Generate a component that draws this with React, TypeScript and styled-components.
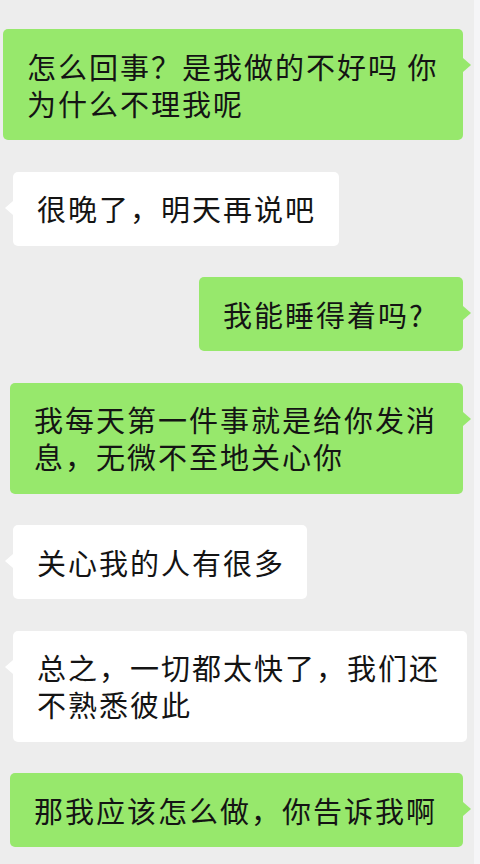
import * as React from "react";
import styled, { createGlobalStyle } from "styled-components";

type Side = "me" | "them";

interface Message {
  side: Side;
  lines: string[];
  width: number;
}

const messages: Message[] = [
  { side: "me", lines: ["怎么回事？是我做的不好吗 你", "为什么不理我呢"], width: 460 },
  { side: "them", lines: ["很晚了，明天再说吧"], width: 326 },
  { side: "me", lines: ["我能睡得着吗?"], width: 264 },
  { side: "me", lines: ["我每天第一件事就是给你发消", "息，无微不至地关心你"], width: 453 },
  { side: "them", lines: ["关心我的人有很多"], width: 294 },
  { side: "them", lines: ["总之，一切都太快了，我们还", "不熟悉彼此"], width: 454 },
  { side: "me", lines: ["那我应该怎么做，你告诉我啊"], width: 453 },
];

const GlobalStyle = createGlobalStyle`
  html, body {
    margin: 0;
    padding: 0;
    background: #ededed;
  }
  body {
    font-family: "Noto Sans CJK SC", "Noto Sans", sans-serif;
  }
`;

const Screen = styled.div`
  box-sizing: border-box;
  width: 480px;
  height: 864px;
  overflow: hidden;
  background: #ededed;
  border-right: 6px solid #f5f5f7;
  display: flex;
  flex-direction: column;
  gap: 31.5px;
  padding: 29px 0 0;
`;

interface RowProps {
  $side: Side;
}

const Row = styled.div<RowProps>`
  display: flex;
  justify-content: ${(p) => (p.$side === "me" ? "flex-end" : "flex-start")};
  padding: ${(p) => (p.$side === "me" ? "0 11px 0 0" : "0 0 0 13px")};
`;

interface BubbleProps {
  $side: Side;
  $width: number;
}

const Bubble = styled.div<BubbleProps>`
  position: relative;
  box-sizing: border-box;
  width: ${(p) => p.$width}px;
  padding: 18.5px 20px 18.5px 24px;
  border-radius: 5px;
  background: ${(p) => (p.$side === "me" ? "#97e86c" : "#ffffff")};
  color: #141414;
  font-size: 29px;
  line-height: 37px;
  letter-spacing: 2px;
  white-space: nowrap;

  &::after {
    content: "";
    position: absolute;
    top: 29px;
    width: 0;
    height: 0;
    border-top: 7px solid transparent;
    border-bottom: 7px solid transparent;
    ${(p) =>
      p.$side === "me"
        ? `right: -8px; border-left: 8px solid #97e86c;`
        : `left: -8px; border-right: 8px solid #ffffff;`}
  }
`;

const Line = styled.div`
  height: 37px;
`;

const App = () => (
  <>
    <GlobalStyle />
    <Screen>
      {messages.map((m, i) => (
        <Row key={i} $side={m.side}>
          <Bubble $side={m.side} $width={m.width}>
            {m.lines.map((line, j) => (
              <Line key={j}>{line}</Line>
            ))}
          </Bubble>
        </Row>
      ))}
    </Screen>
  </>
);

export default App;
